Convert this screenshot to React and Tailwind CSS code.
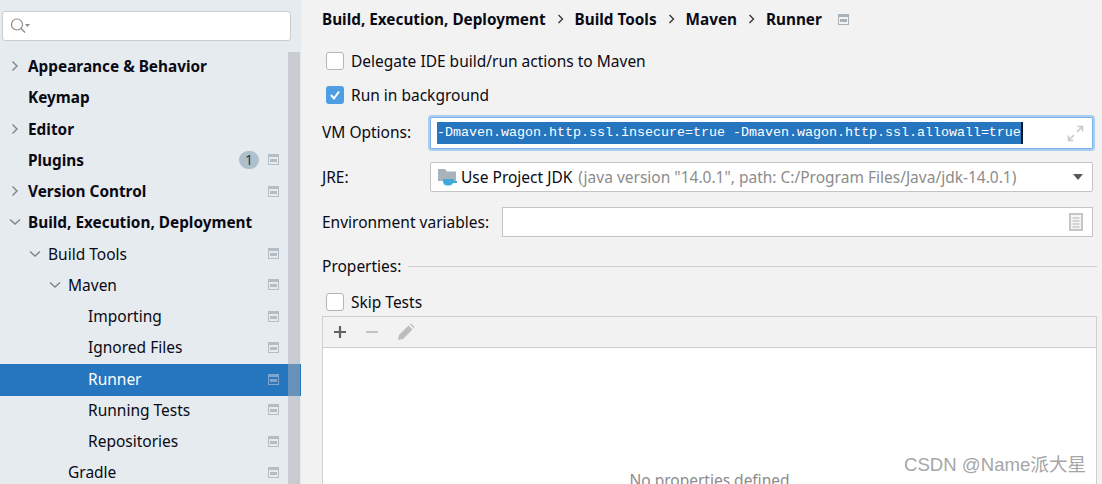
const sidebarItems = [
  { label: "Appearance & Behavior", bold: true, arrow: "right", depth: 0 },
  { label: "Keymap", bold: true, depth: 0 },
  { label: "Editor", bold: true, arrow: "right", depth: 0 },
  { label: "Plugins", bold: true, depth: 0, badge: "1", scoped: true },
  { label: "Version Control", bold: true, arrow: "right", depth: 0, scoped: true },
  { label: "Build, Execution, Deployment", bold: true, arrow: "down", depth: 0 },
  { label: "Build Tools", arrow: "down", depth: 1, scoped: true },
  { label: "Maven", arrow: "down", depth: 2, scoped: true },
  { label: "Importing", depth: 3, scoped: true },
  { label: "Ignored Files", depth: 3, scoped: true },
  { label: "Runner", depth: 3, scoped: true, selected: true },
  { label: "Running Tests", depth: 3, scoped: true },
  { label: "Repositories", depth: 3, scoped: true },
  { label: "Gradle", depth: 2, scoped: true },
];

const depthPadding = ["pl-[28px]", "pl-[48px]", "pl-[68px]", "pl-[88px]"];
const arrowLeft = ["ml-[9px]", "ml-[29px]", "ml-[49px]"];

function ScopeIcon({ selected }) {
  return (
    <svg width="11" height="11" viewBox="0 0 11 11" className="shrink-0">
      <rect x="0" y="0" width="11" height="11" fill={selected ? "#7fa6cf" : "#b4bcc4"} />
      <rect x="1" y="3" width="9" height="7" fill={selected ? "#2f76bd" : "#e6ebf0"} />
      <rect x="2" y="5" width="7" height="3" fill={selected ? "#7fa6cf" : "#b4bcc4"} />
    </svg>
  );
}

function Chevron({ dir }) {
  return (
    <svg width="12" height="12" viewBox="0 0 12 12" fill="none" stroke="#7f8387" strokeWidth="1.4" className="shrink-0">
      {dir === "right" ? <path d="M3.5 1.5 L8 6 L3.5 10.5" /> : <path d="M1 3.5 L6 8 L11 3.5" />}
    </svg>
  );
}

function SidebarRow({ item }) {
  return (
    <div
      className={`relative flex items-center pr-[22px] pb-[1px] ${item.selected ? "h-[32px] -mb-[0.75px] bg-[#2675bf] text-white" : "h-[31.25px] text-[#0a0a14]"}`}
    >
      {item.arrow && (
        <span className={`absolute left-0 ${arrowLeft[item.depth]}`}>
          <Chevron dir={item.arrow} />
        </span>
      )}
      <span className={`${depthPadding[item.depth]} ${item.bold ? "font-bold text-[15.35px]" : ""}`}>{item.label}</span>
      <span className="ml-auto flex items-center">
        {item.badge && (
          <span className="w-[20px] h-[18px] mr-[9px] rounded-full bg-[#afbfcc] flex items-center justify-center text-[14px] leading-none text-[#2a3540]">
            {item.badge}
          </span>
        )}
        {item.scoped && <ScopeIcon selected={item.selected} />}
      </span>
    </div>
  );
}

function Sidebar() {
  return (
    <div className="relative w-[301px] shrink-0 bg-[#e6ebf0] overflow-hidden">
      <div className="pl-[2px] pr-[10px] pt-[11px] pb-[11px] h-[51px]">
        <div className="h-[30px] bg-white border border-[#c9cccf] rounded-[3px] flex items-center pl-[7px] gap-[1px]">
          <svg width="21" height="18" viewBox="0 0 21 18" fill="none" className="shrink-0">
            <circle cx="7" cy="7.5" r="5.5" stroke="#8c8c8c" strokeWidth="1.2" />
            <path d="M11 11.5 L15 15.5" stroke="#8c8c8c" strokeWidth="1.5" />
            <path d="M15 7 H20 L17.5 10 Z" fill="#8c8c8c" />
          </svg>
        </div>
      </div>
      {sidebarItems.map((item) => (
        <SidebarRow key={item.label} item={item} />
      ))}
      {/* scrollbar sits on top of the rows */}
      <div className="absolute top-[52px] right-[1px] bottom-0 w-[12px] bg-[#a9adb3]/50" />
    </div>
  );
}

function Checkbox({ checked }) {
  if (checked) {
    return (
      <span className="w-[18px] h-[18px] rounded-[3px] bg-[#4f9ee3] flex items-center justify-center shrink-0">
        <svg width="12" height="12" viewBox="0 0 12 12" fill="none" stroke="#ffffff" strokeWidth="2">
          <path d="M2 6 L5 9.5 L10 2.5" />
        </svg>
      </span>
    );
  }
  return <span className="w-[18px] h-[18px] rounded-[3px] bg-white border border-[#b5b5b5] shrink-0" />;
}

function CheckRow({ checked, label, className }) {
  return (
    <div className={`flex items-center gap-[7px] pl-[4px] ${className}`}>
      <Checkbox checked={checked} />
      <span>{label}</span>
    </div>
  );
}

function Crumb({ label }) {
  return <span className="font-bold text-[15.3px]">{label}</span>;
}

function CrumbArrow() {
  return (
    <svg width="7" height="10" viewBox="0 0 7 10" fill="none" stroke="#333333" strokeWidth="1.3" className="mx-[11px] shrink-0">
      <path d="M1.5 1 L5.5 5 L1.5 9" />
    </svg>
  );
}

function JdkIcon() {
  return (
    <svg width="20" height="18" viewBox="0 0 20 18" className="shrink-0">
      <path d="M0 1 H7 L9 3.5 H18 V13 H0 Z" fill="#a9b3bc" />
      <path d="M5 11 H16 V13 H19 V15 H15 Q14 17.5 11 17.5 H9 Q6 17.5 5 14 Z" fill="#40a9dc" />
    </svg>
  );
}

export default function App() {
  return (
    <div className="w-[1102px] h-[484px] overflow-hidden flex bg-[#f2f2f2] text-[15.5px] leading-[20px] text-[#0a0a14] font-['Noto_Sans','Noto_Sans_CJK_SC',sans-serif] relative">
      <Sidebar />
      <main className="flex-1 min-w-0 pl-[21px] pr-[9px]">
        <div className="h-[38px] flex items-center">
          <Crumb label="Build, Execution, Deployment" />
          <CrumbArrow />
          <Crumb label="Build Tools" />
          <CrumbArrow />
          <Crumb label="Maven" />
          <CrumbArrow />
          <Crumb label="Runner" />
          <span className="ml-[16px]">
            <svg width="11" height="11" viewBox="0 0 11 11">
              <rect width="11" height="11" fill="#a8b0b8" />
              <rect x="1" y="3" width="9" height="7" fill="#f2f2f2" />
              <rect x="2" y="5" width="7" height="3" fill="#a8b0b8" />
            </svg>
          </span>
        </div>

        <CheckRow label="Delegate IDE build/run actions to Maven" className="h-[20px] mt-[13px]" />
        <CheckRow checked label="Run in background" className="h-[20px] mt-[14px]" />

        <div className="flex items-center mt-[12px] h-[32px]">
          <span className="w-[108px] shrink-0 pb-[2px]">VM Options:</span>
          <div className="flex-1 h-[32px] bg-white border border-[#7fb2e8] shadow-[0_0_0_2px_#a9cdf0] rounded-[2px] flex items-center pl-[6px] pr-[8px]">
            <span className="bg-[#2675bf] text-white h-[22px] flex items-center font-['Liberation_Mono',monospace] text-[13.33px] border-r-[2px] border-[#0a1a2a] whitespace-pre">
              -Dmaven.wagon.http.ssl.insecure=true -Dmaven.wagon.http.ssl.allowall=true
            </span>
            <svg width="17" height="17" viewBox="0 0 17 17" fill="none" stroke="#c6cacd" strokeWidth="1.6" className="ml-auto shrink-0">
              <path d="M10 7 L15.5 1.5 M10.5 1.5 H15.5 V6.5 M7 10 L1.5 15.5 M1.5 10.5 V15.5 H6.5" />
            </svg>
          </div>
        </div>

        <div className="flex items-center mt-[13px] h-[30px]">
          <span className="w-[108px] shrink-0">JRE:</span>
          <div className="flex-1 h-[30px] bg-white border border-[#c4c4c4] rounded-[2px] flex items-center pl-[7px] pr-[8px] whitespace-nowrap">
            <JdkIcon />
            <span className="ml-[3px]">Use Project JDK</span>
            <span className="ml-[6px] text-[#8c8c8c]">(java version "14.0.1", path: C:/Program Files/Java/jdk-14.0.1)</span>
            <svg width="12" height="7" viewBox="0 0 12 7" className="ml-auto shrink-0">
              <path d="M1 0 H11 L6 6 Z" fill="#5a5a5a" />
            </svg>
          </div>
        </div>

        <div className="flex items-center mt-[15px] h-[30px]">
          <span className="w-[180px] shrink-0">Environment variables:</span>
          <div className="flex-1 h-[30px] bg-white border border-[#c4c4c4] flex items-center justify-end pr-[9px]">
            <svg width="14" height="18" viewBox="0 0 14 18">
              <rect width="14" height="18" fill="#c4c8cb" />
              <rect x="2" y="2" width="10" height="14" fill="#f4f4f4" />
              <path d="M3.5 5 H10.5 M3.5 8 H10.5 M3.5 11 H10.5 M3.5 14 H10.5" stroke="#b0b4b7" strokeWidth="1" />
            </svg>
          </div>
        </div>

        <div className="flex items-center mt-[19px] h-[20px]">
          <span>Properties:</span>
          <div className="flex-1 h-px bg-[#cfcfcf] ml-[7px] -mr-[4px]" />
        </div>

        <CheckRow label="Skip Tests" className="h-[20px] mt-[16px]" />

        <div className="mt-[4px] -mr-[4px] border border-[#cfcfcf]">
          <div className="h-[31px] flex items-center gap-[18px] pl-[10px] border-b border-[#cfcfcf]">
            <svg width="14" height="14" viewBox="0 0 14 14" stroke="#5f6366" strokeWidth="2.2">
              <path d="M7 1 V13 M1 7 H13" />
            </svg>
            <svg width="14" height="14" viewBox="0 0 14 14" stroke="#c2c2c2" strokeWidth="2">
              <path d="M1 7 H13" />
            </svg>
            <svg width="18" height="18" viewBox="0 0 18 18" fill="#bdbdbd">
              <path d="M1 17 L2 12 L11.5 2.5 L15.5 6.5 L6 16 Z M12.8 1.2 L14 0.5 L17.5 4 L16.8 5.2 Z" />
            </svg>
          </div>
          <div className="h-[200px] bg-white flex justify-center pt-[122px] text-[#8c8c8c]">
            <span>No properties defined</span>
          </div>
        </div>
      </main>
      {/* watermark stamped over the screenshot */}
      <span className="absolute left-[904px] top-[454px] text-[18.6px] leading-[22px] text-[#a6a6a6] font-['Liberation_Sans','Noto_Sans_CJK_SC',sans-serif]">
        CSDN @Name派大星
      </span>
    </div>
  );
}
